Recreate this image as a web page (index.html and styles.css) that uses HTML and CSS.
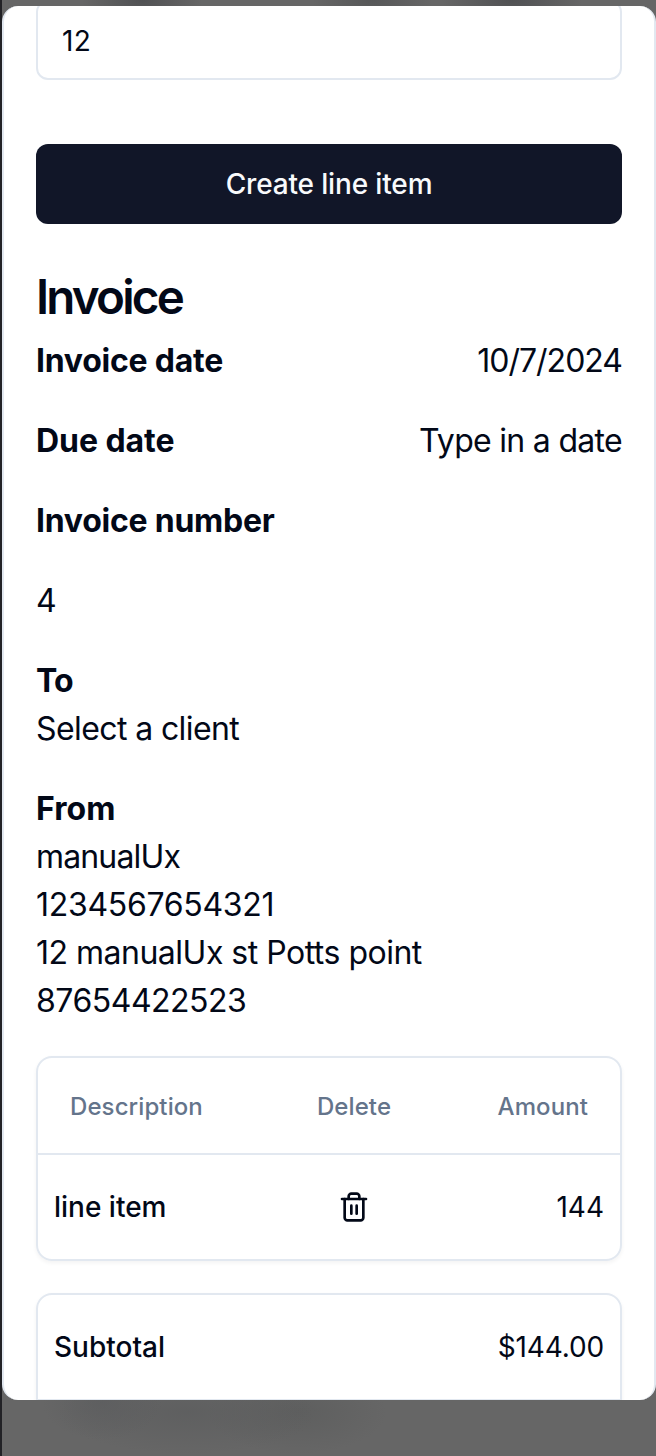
FILE: index.html
```html
<!DOCTYPE html>
<html lang="en">
<head>
<meta charset="utf-8">
<title>Invoice</title>
<link rel="stylesheet" href="styles.css">
</head>
<body>
<div class="backdrop">
  <main class="dialog">
    <div class="field">12</div>
    <button class="create" type="button"><span>Create line item</span></button>
    <h1 class="title">Invoice</h1>
    <div class="row"><b class="key">Invoice date</b><span class="date">10/7/2024</span></div>
    <div class="row"><b class="key due">Due date</b><span class="hint">Type in a date</span></div>
    <div class="row"><b class="key">Invoice number</b></div>
    <div class="row"><span>4</span></div>
    <section class="party">
      <b class="key to">To</b>
      <span class="client">Select a client</span>
    </section>
    <section class="party">
      <b class="key from">From</b>
      <span class="name">manualUx</span>
      <span class="account">1234567654321</span>
      <span class="address">12 manualUx st Potts point</span>
      <span class="phone">87654422523</span>
    </section>
    <section class="card">
      <div class="head"><span>Description</span><span class="mid">Delete</span><span class="end">Amount</span></div>
      <div class="item">
        <span class="label">line item</span>
        <svg class="trash" viewBox="0 0 24 24" aria-label="Delete"><path d="M3 6h18"/><path d="M19 6v14c0 1-1 2-2 2H7c-1 0-2-1-2-2V6"/><path d="M8 6V4c0-1 1-2 2-2h4c1 0 2 1 2 2v2"/><path d="M10 11v6M14 11v6"/></svg>
        <span class="end">144</span>
      </div>
    </section>
    <section class="card totals">
      <div class="total"><span class="label">Subtotal</span><span class="money">$144.00</span></div>
    </section>
  </main>
</div>
</body>
</html>
```
FILE: styles.css
```css
* { box-sizing: border-box; }
body { margin: 0; font-family: Inter, "Liberation Sans", sans-serif; color: #020817; }
.backdrop {
  height: 1456px;
  padding-top: 6px;
  border-left: 2px solid #222226;
  overflow: hidden;
  background:
    radial-gradient(ellipse 60px 38px at 100px 1402px, #5a5b5d99, #66666600),
    radial-gradient(ellipse 130px 42px at 185px 1412px, #5b5c5daa, #66666600),
    radial-gradient(ellipse 90px 42px at 295px 1412px, #5a5b5baa, #66666600),
    radial-gradient(ellipse 60px 30px at 140px 0, #505153, #66666600),
    radial-gradient(ellipse 60px 30px at 370px 0, #565758, #66666600),
    radial-gradient(ellipse 70px 30px at 510px 0, #505153, #66666600),
    #666;
}
.dialog {
  height: 1394px;
  padding: 0 32px;
  overflow: hidden;
  border: solid #e2e8f0;
  border-width: 0 2px;
  border-radius: 16px;
  background: #fff;
  font-size: 32px;
  line-height: 48px;
}
.field {
  height: 80px;
  margin-top: -6px;
  padding: 16px 24px;
  border: 2px solid #e2e8f0;
  border-radius: 12px;
  font-size: 28px;
  line-height: 46px;
  letter-spacing: 0.3px;
}
.create {
  display: block;
  width: 100%;
  height: 80px;
  margin: 64px 0 45px;
  border: 0;
  border-radius: 12px;
  background: #111628;
  color: #f8fafc;
  font: 500 28px/40px Inter, "Liberation Sans", sans-serif;
  letter-spacing: -0.15px;
}
.title {
  margin: 0 0 12px;
  font-size: 47.5px;
  font-weight: 600;
  line-height: 56px;
  letter-spacing: -2.8px;
}
.row { display: flex; justify-content: space-between; margin-bottom: 32px; }
.key { font-weight: 700; letter-spacing: -0.25px; }
.due { letter-spacing: -0.05px; }
.to { letter-spacing: -0.9px; }
.from { letter-spacing: 0.1px; }
.date { letter-spacing: -1px; }
.hint { letter-spacing: -0.7px; }
.client { letter-spacing: -0.6px; }
.name { letter-spacing: -0.85px; }
.account { letter-spacing: -0.3px; }
.address, .phone { letter-spacing: -0.5px; }
.party { display: flex; flex-direction: column; margin-bottom: 32px; }
.party + .card { margin-top: -1px; }
.card {
  border: 2px solid #e2e8f0;
  border-radius: 16px;
  box-shadow: 0 2px 4px rgba(0, 0, 0, .05);
  font-size: 28px;
  line-height: 40px;
}
.head, .item { display: grid; grid-template-columns: 224px 120px 1fr; align-items: center; }
.head {
  height: 97px;
  padding: 2px 32px 0;
  border-bottom: 2px solid #e2e8f0;
  color: #64748b;
  font-size: 24px;
  font-weight: 500;
  letter-spacing: 0.1px;
}
.item { grid-template-columns: 240px 120px 1fr; height: 104px; padding: 0 16px; }
.mid { text-align: center; }
.end { text-align: right; }
.label { font-weight: 500; }
.trash {
  width: 32px;
  height: 32px;
  justify-self: center;
  fill: none;
  stroke: currentColor;
  stroke-width: 2;
  stroke-linecap: round;
  stroke-linejoin: round;
}
.totals { margin-top: 32px; height: 240px; }
.total {
  display: flex;
  justify-content: space-between;
  align-items: center;
  height: 106px;
  padding: 0 16px;
  border-bottom: 2px solid #e2e8f0;
}
.money { letter-spacing: -0.15px; }
```
